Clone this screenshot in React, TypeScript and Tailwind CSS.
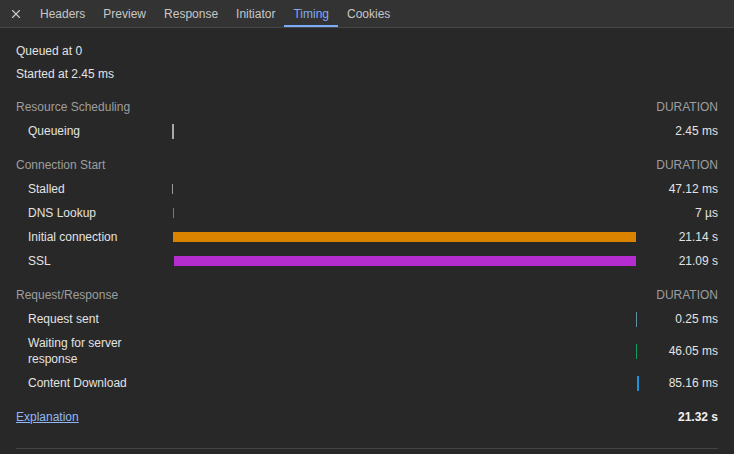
import React from 'react';
import { X } from 'lucide-react';

type Row = {
  label: string;
  duration: string;
  left: number;
  width: number;
  height: number;
  color: string;
  tall?: boolean;
};

type Section = {
  title: string;
  rows: Row[];
};

const tabs = ['Headers', 'Preview', 'Response', 'Initiator', 'Timing', 'Cookies'];

const sections: Section[] = [
  {
    title: 'Resource Scheduling',
    rows: [{ label: 'Queueing', duration: '2.45 ms', left: 0, width: 2, height: 15, color: '#a8a8a8' }],
  },
  {
    title: 'Connection Start',
    rows: [
      { label: 'Stalled', duration: '47.12 ms', left: 0, width: 1, height: 10, color: '#9a9a9a' },
      { label: 'DNS Lookup', duration: '7 µs', left: 1, width: 1, height: 10, color: '#2a9d8f' },
      { label: 'Initial connection', duration: '21.14 s', left: 1, width: 463, height: 10, color: '#d98300' },
      { label: 'SSL', duration: '21.09 s', left: 2, width: 462, height: 10, color: '#b52dcf' },
    ],
  },
  {
    title: 'Request/Response',
    rows: [
      { label: 'Request sent', duration: '0.25 ms', left: 464, width: 1, height: 15, color: '#5f8f9a' },
      { label: 'Waiting for server response', duration: '46.05 ms', left: 464, width: 1, height: 15, color: '#0f9d58', tall: true },
      { label: 'Content Download', duration: '85.16 ms', left: 465, width: 2, height: 15, color: '#1a94dc' },
    ],
  },
];

const TimingRow: React.FC<{ row: Row }> = ({ row }) => (
  <div className={`flex items-center ${row.tall ? 'h-[40px]' : 'h-[24px]'}`}>
    <div className="w-[156px] shrink-0 pl-3 pr-5 leading-4 text-[#e3e3e3]">{row.label}</div>
    <div className="flex w-[467px] shrink-0 items-center">
      <div
        className="shrink-0"
        style={{ marginLeft: row.left, width: row.width, height: row.height, backgroundColor: row.color }}
      />
    </div>
    <div className="flex-1 text-right text-[#e3e3e3]">{row.duration}</div>
  </div>
);

export default function App() {
  return (
    <div
      className="h-[454px] w-[734px] overflow-hidden bg-[#282828] text-[12px]"
      style={{ fontFamily: '"Liberation Sans", Arial, sans-serif' }}
    >
      <div className="flex h-[28px] items-stretch border-b border-[#474747] bg-[#333333]">
        <div className="flex w-[31px] items-center justify-center text-[#c7c7c7]">
          <X className="h-[14px] w-[14px]" strokeWidth={2} />
        </div>
        {tabs.map((t) => (
          <div
            key={t}
            className={`flex items-center px-[9px] pt-[1px] ${
              t === 'Timing' ? 'border-b-2 border-[#7cacf8] pt-[3px] text-[#7cacf8]' : 'text-[#c7c7c7]'
            }`}
          >
            {t}
          </div>
        ))}
      </div>

      <div className="px-4 pt-[11px]">
        <div className="flex h-[23px] items-center text-[#e3e3e3]">Queued at 0</div>
        <div className="flex h-[23px] items-center text-[#e3e3e3]">Started at 2.45 ms</div>

        {sections.map((s) => (
          <div key={s.title} className="mt-[10px]">
            <div className="flex h-[24px] items-center justify-between text-[#9e9e9e]">
              <span>{s.title}</span>
              <span>DURATION</span>
            </div>
            {s.rows.map((r) => (
              <TimingRow key={r.label} row={r} />
            ))}
          </div>
        ))}

        <div className="mt-[10px] flex h-[24px] items-center justify-between">
          <a href="#" className="text-[#93b8f6] underline">
            Explanation
          </a>
          <span className="font-bold text-[#f1f1f1]">21.32 s</span>
        </div>

        <div className="mt-[19px] border-t border-[#444444]" />
      </div>
    </div>
  );
}
